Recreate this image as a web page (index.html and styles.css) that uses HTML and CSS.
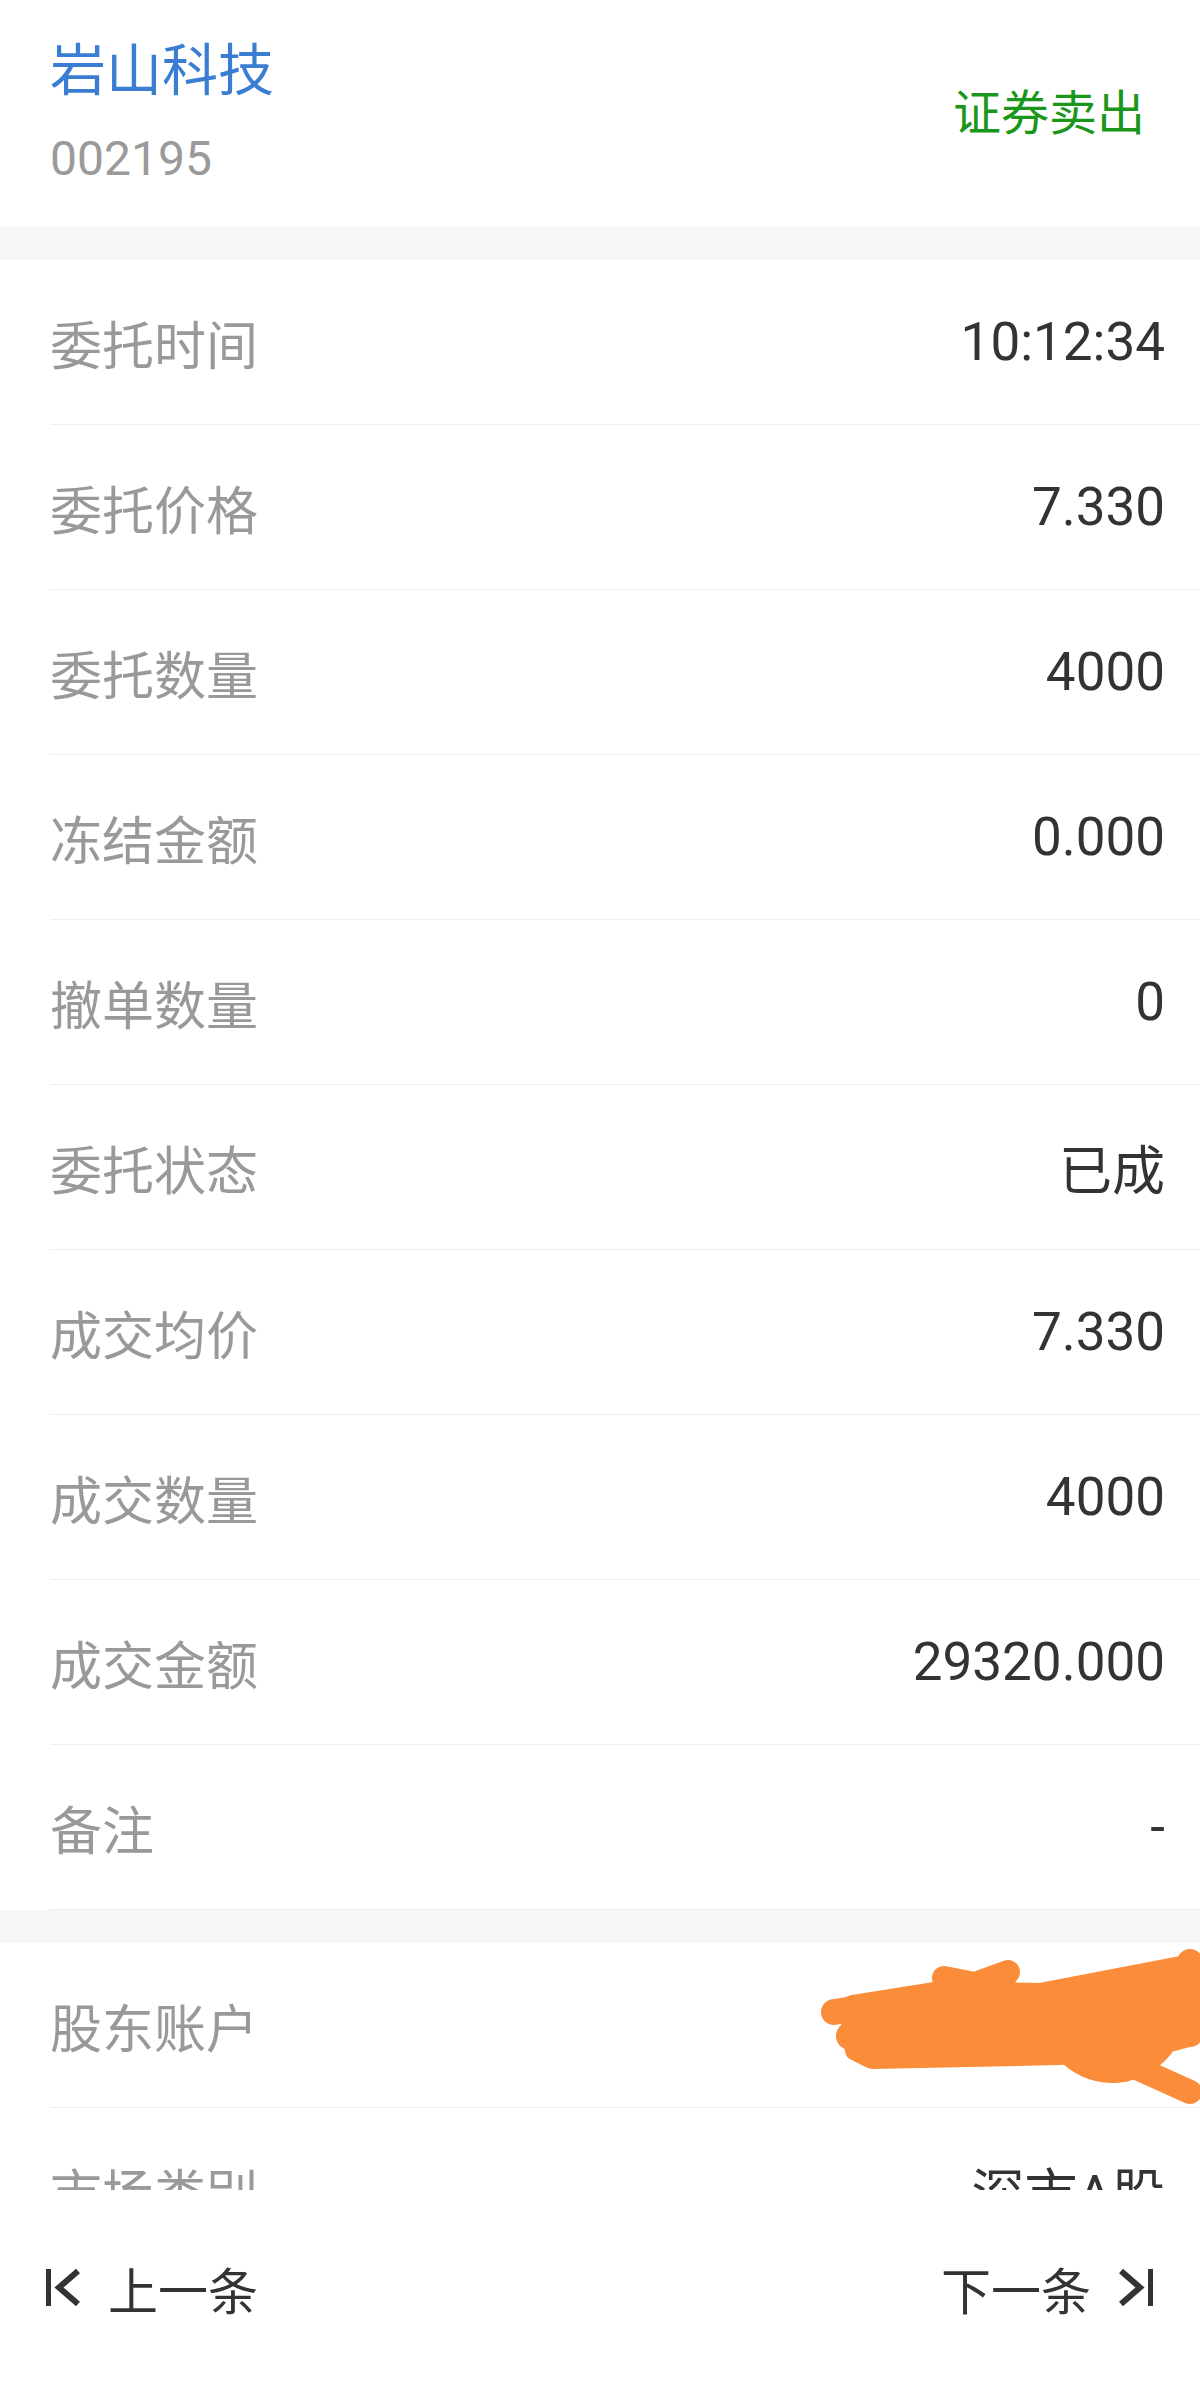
FILE: index.html
```html
<!DOCTYPE html>
<html lang="zh-CN">
<head>
  <meta charset="UTF-8">
  <meta name="viewport" content="width=device-width, initial-scale=1.0">
  <title>委托详情</title>
  <link rel="stylesheet" href="styles.css">
</head>
<body>

  <div class="page">
    <div class="scroll">
      <header class="head">
        <div class="stock">
          <div class="stock-name">岩山科技</div>
          <div class="stock-code">002195</div>
        </div>
        <div class="trade-type">证券卖出</div>
      </header>

      <div class="gap"></div>

      <ul class="info">
        <li class="row"><span class="label">委托时间</span><span class="value">10:12:34</span></li>
        <li class="row"><span class="label">委托价格</span><span class="value">7.330</span></li>
        <li class="row"><span class="label">委托数量</span><span class="value">4000</span></li>
        <li class="row"><span class="label">冻结金额</span><span class="value">0.000</span></li>
        <li class="row"><span class="label">撤单数量</span><span class="value">0</span></li>
        <li class="row"><span class="label">委托状态</span><span class="value">已成</span></li>
        <li class="row"><span class="label">成交均价</span><span class="value">7.330</span></li>
        <li class="row"><span class="label">成交数量</span><span class="value">4000</span></li>
        <li class="row"><span class="label">成交金额</span><span class="value">29320.000</span></li>
        <li class="row"><span class="label">备注</span><span class="value">-</span></li>
      </ul>

      <div class="gap"></div>

      <ul class="info">
        <li class="row">
          <span class="label">股东账户</span>
          <!-- hand-drawn cover over the account number -->
          <svg class="scribble" viewBox="820 1953 380 150" fill="none" stroke="#fb8c3a" stroke-linecap="round" stroke-linejoin="round">
            <path fill="#fb8c3a" stroke-width="22" d="M852,2006 L940,1992 L1040,1994 L1186,1966 L1188,2036 L1150,2046 L1060,2054 L872,2058 L856,2050 L852,2030 Z"/>
            <path stroke-width="26" d="M834,2012 L930,1998"/>
            <path stroke-width="28" d="M850,2036 L900,2030"/>
            <path stroke-width="24" d="M944,1978 L975,1984 L1008,1972 L992,1994"/>
            <path stroke-width="26" d="M1190,1962 L1190,2034"/>
            <path stroke-width="24" d="M1062,2046 Q1088,2076 1124,2070 Q1150,2062 1162,2046"/>
            <path stroke-width="24" d="M1128,2064 L1190,2092"/>
          </svg>
        </li>
        <li class="row"><span class="label">市场类别</span><span class="value">深市A股</span></li>
      </ul>
    </div>

    <footer class="pager">
      <a class="pager-btn">
        <svg class="pager-icon" viewBox="0 0 34 38" fill="none" stroke="#333">
          <line x1="2.5" y1="0" x2="2.5" y2="37" stroke-width="5"/>
          <polyline points="32,2 13,18.5 32,35" stroke-width="6"/>
        </svg>
        <span>上一条</span>
      </a>
      <a class="pager-btn">
        <span>下一条</span>
        <svg class="pager-icon" viewBox="0 0 34 38" fill="none" stroke="#333">
          <polyline points="2,2 21,18.5 2,35" stroke-width="6"/>
          <line x1="31.5" y1="0" x2="31.5" y2="37" stroke-width="5"/>
        </svg>
      </a>
    </footer>
  </div>

</body>
</html>
```

FILE: styles.css
```css
* {
  box-sizing: border-box;
}
body {
  margin: 0;
  background-color: #fff;
  font-family: Roboto, "Noto Sans CJK SC", sans-serif;
}
.page {
  display: flex;
  flex-direction: column;
  height: 2386px;
}
.scroll {
  flex: 1;
  min-height: 0;
  overflow: hidden;
}
.head {
  display: flex;
  justify-content: space-between;
  height: 227px;
  padding: 0 55px 0 50px;
}
.stock {
  padding-top: 38px;
}
.stock-name {
  font-size: 56px;
  line-height: 67px;
  color: #3a7dd2;
}
.stock-code {
  margin-top: 25px;
  font-size: 48px;
  line-height: 58px;
  color: #9a9a9a;
}
.trade-type {
  align-self: center;
  font-size: 48px;
  line-height: 58px;
  color: #1a961a;
}
.gap {
  height: 33px;
  background-color: #f5f6f8;
}
.info {
  list-style: none;
  margin: 0;
  padding: 0;
}
.row {
  position: relative;
  display: flex;
  justify-content: space-between;
  align-items: center;
  height: 165px;
  margin-left: 50px;
  padding-right: 35px;
  border-bottom: 1px solid #eeeeee;
}
.label {
  font-size: 52px;
  color: #999;
}
.value {
  font-size: 53px;
  color: #333;
}
.scribble {
  position: absolute;
  left: 770px;
  top: 10px;
  width: 380px;
  height: 150px;
  overflow: visible;
}
.pager {
  display: flex;
  justify-content: space-between;
  align-items: center;
  height: 196px;
  padding: 0 47px 0 46px;
  background-color: #fff;
}
.pager-btn {
  display: flex;
  align-items: center;
  gap: 28px;
  font-size: 50px;
  color: #333;
  cursor: pointer;
}
.pager-icon {
  width: 34px;
  height: 38px;
}
```
